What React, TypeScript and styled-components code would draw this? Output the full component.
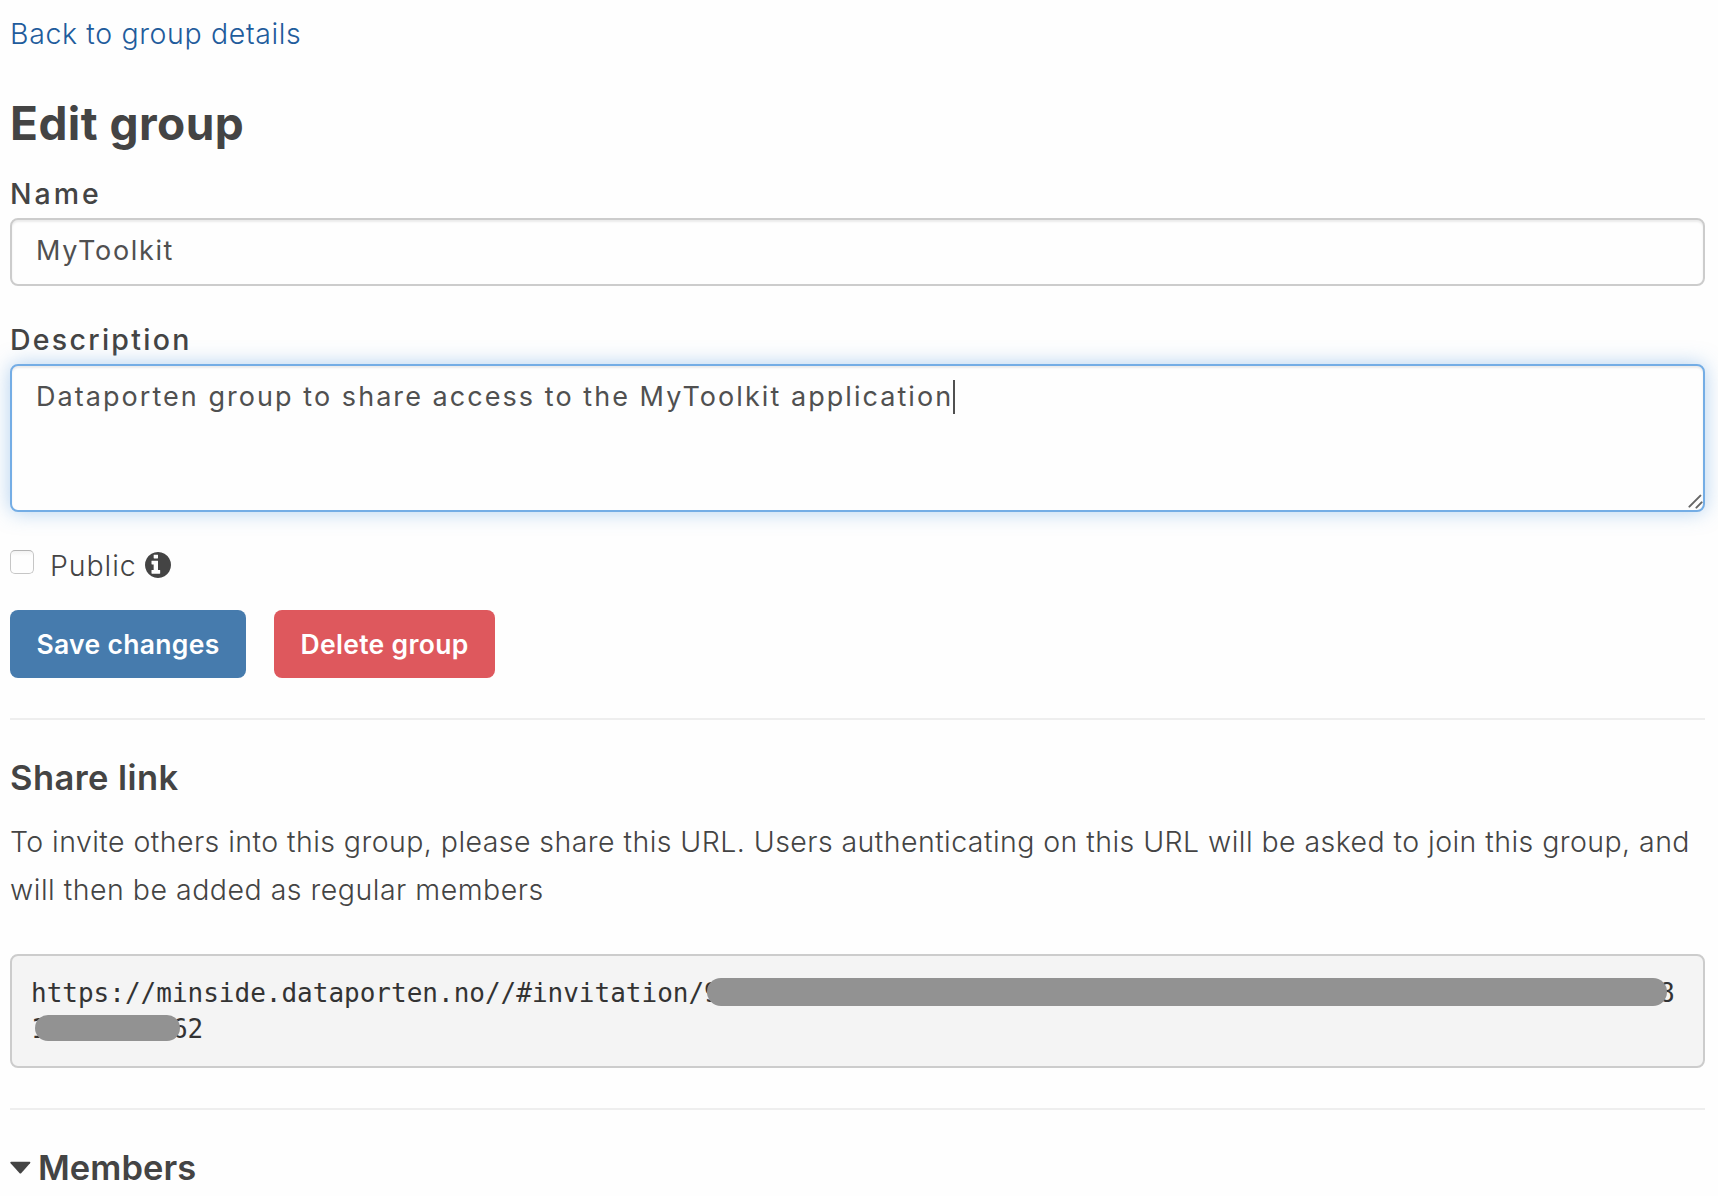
import React from "react";
import styled, { createGlobalStyle } from "styled-components";

const Global = createGlobalStyle`
  * { box-sizing: border-box; }
  body {
    margin: 0;
    background: #fefefe;
    color: #444;
    font: 300 28.5px/48px Inter, "Liberation Sans", sans-serif;
  }
`;

const Page = styled.main`
  display: flex;
  flex-direction: column;
  width: 1718px;
  height: 1196px;
  overflow: hidden;
  padding: 10px 13px 0 10px;
`;

const BackLink = styled.a`
  align-self: flex-start;
  color: #1f5c9c;
  letter-spacing: 0.63px;
  text-decoration: none;
`;

const Title = styled.h1`
  margin: 40px 0 26px;
  font-size: 46px;
  font-weight: 700;
  line-height: 50px;
  letter-spacing: 0.45px;
`;

const Field = styled.div<{ $gap: number }>`
  display: flex;
  flex-direction: column;
  gap: ${(p) => p.$gap}px;
  margin-bottom: 34px;
`;

const Label = styled.label<{ $tracking: number }>`
  font-size: 28.5px;
  font-weight: 500;
  line-height: 40px;
  letter-spacing: ${(p) => p.$tracking}px;
`;

const TextInput = styled.input`
  height: 68px;
  padding: 0 24px 4px;
  border: 2px solid #ccc;
  border-radius: 8px;
  background: #fefefe;
  box-shadow: inset 0 2px 2px rgba(0, 0, 0, 0.075);
  color: #505050;
  font: 400 27px/36px Inter, "Liberation Sans", sans-serif;
  letter-spacing: 1.65px;
  outline: none;
`;

const TextArea = styled.div`
  position: relative;
  display: flex;
  align-items: flex-start;
  height: 148px;
  padding: 13px 24px 11px;
  border: 2px solid #74ade5;
  border-radius: 8px;
  background: #fefefe;
  box-shadow: inset 0 2px 2px rgba(0, 0, 0, 0.075), 0 0 20px rgba(102, 163, 226, 0.5);
  color: #505050;
  font-size: 27px;
  font-weight: 400;
  line-height: 36px;
  letter-spacing: 2.05px;
  white-space: nowrap;
`;

const Caret = styled.span`
  width: 2px;
  height: 34px;
  margin: 1px 0 0;
  background: #505050;
`;

const ResizeGrip = styled.svg`
  position: absolute;
  right: 0;
  bottom: 0;
  width: 16px;
  height: 16px;
`;

const PublicRow = styled.label`
  display: flex;
  height: 48px;
  margin-top: -4px;
  letter-spacing: 0.92px;
`;

const Checkbox = styled.input`
  appearance: none;
  width: 24px;
  height: 24px;
  margin: 8px 16px 0 0;
  border: 1px solid #c6c6c6;
  border-top-color: #b4b4b4;
  border-radius: 5px;
  background: linear-gradient(#f3f3f3, #fefefe 5px);
`;

const InfoIcon = styled.svg`
  width: 26px;
  height: 26px;
  margin: 10px 0 0 8px;
`;

const Actions = styled.div`
  display: flex;
  gap: 28px;
  margin: 20px 0 40px;
`;

const Button = styled.button<{ $danger?: boolean }>`
  width: ${(p) => (p.$danger ? 221 : 236)}px;
  height: 68px;
  padding: 0;
  border: 0;
  border-radius: 8px;
  background: ${(p) => (p.$danger ? "#de585d" : "#467bad")};
  color: #fff;
  font: 600 26.5px/36px Inter, "Liberation Sans", sans-serif;
  letter-spacing: 0.32px;
`;

const Divider = styled.hr`
  flex: none;
  width: 100%;
  height: 2px;
  margin: 0;
  border: 0;
  background: #eee;
`;

const SectionTitle = styled.h2<{ $tracking: number }>`
  display: flex;
  align-items: center;
  gap: 7px;
  margin: 39px 0 21px;
  font-size: 34.5px;
  font-weight: 600;
  line-height: 38px;
  letter-spacing: ${(p) => p.$tracking}px;
`;

const Help = styled.p`
  margin: 0 0 40px;
  white-space: nowrap;
`;

const HelpLine = styled.span<{ $tracking: number }>`
  display: block;
  letter-spacing: ${(p) => p.$tracking}px;
`;

const LinkBox = styled.pre`
  height: 114px;
  margin: 0 0 40px;
  padding: 19px;
  border: 2px solid #ccc;
  border-radius: 8px;
  background: #f4f4f4;
  color: #333;
  font: 400 26px/36px "DejaVu Sans Mono", monospace;
`;

const LinkLine = styled.code`
  position: relative;
  display: block;
  font: inherit;
  white-space: pre;
`;

const Redaction = styled.span<{ $x: number; $y: number; $w: number; $h: number }>`
  position: absolute;
  left: ${(p) => p.$x}px;
  top: ${(p) => p.$y}px;
  width: ${(p) => p.$w}px;
  height: ${(p) => p.$h}px;
  border-radius: 14px;
  background: #929292;
`;

const Disclosure = styled.svg`
  width: 21px;
  height: 13px;
  margin-top: -2px;
`;

export default function App() {
  return (
    <Page>
      <Global />
      <BackLink href="#">Back to group details</BackLink>
      <Title>Edit group</Title>
      <Field $gap={4}>
        <Label $tracking={3}>Name</Label>
        <TextInput defaultValue="MyToolkit" />
      </Field>
      <Field $gap={4}>
        <Label $tracking={2.28}>Description</Label>
        <TextArea role="textbox">
          <span>Dataporten group to share access to the MyToolkit application</span>
          <Caret />
          <ResizeGrip viewBox="0 0 16 16" fill="none" stroke="#666" strokeWidth="2" strokeLinecap="round">
            <path d="M2.4 12.6L13.4 1.6M9.4 13.6L14.6 8.4" />
          </ResizeGrip>
        </TextArea>
      </Field>
      <PublicRow>
        <Checkbox type="checkbox" />
        <span>Public</span>
        <InfoIcon viewBox="128 128 1536 1536" fill="#444">
          <path d="M1024 1376v-160q0-14-9-23t-23-9h-96v-512q0-14-9-23t-23-9h-320q-14 0-23 9t-9 23v160q0 14 9 23t23 9h96v320h-96q-14 0-23 9t-9 23v160q0 14 9 23t23 9h448q14 0 23-9t9-23zM896 480v-160q0-14-9-23t-23-9h-192q-14 0-23 9t-9 23v160q0 14 9 23t23 9h192q14 0 23-9t9-23zM1664 896q0 209-103 385.5t-279.5 279.5t-385.5 103t-385.5-103t-279.5-279.5t-103-385.5t103-385.5t279.5-279.5t385.5-103t385.5 103t279.5 279.5t103 385.5z" />
        </InfoIcon>
      </PublicRow>
      <Actions>
        <Button>Save changes</Button>
        <Button $danger>Delete group</Button>
      </Actions>
      <Divider />
      <SectionTitle $tracking={0.45}>Share link</SectionTitle>
      <Help>
        <HelpLine $tracking={0.44}>
          To invite others into this group, please share this URL. Users authenticating on this URL will be asked to join this group, and
        </HelpLine>
        <HelpLine $tracking={0.5}>will then be added as regular members</HelpLine>
      </Help>
      <LinkBox>
        <LinkLine>
          {"https://minside.dataporten.no//#invitation/9" + " ".repeat(60) + "8"}
          <Redaction $x={676} $y={2.7} $w={960} $h={28} />
        </LinkLine>
        <LinkLine>
          {"1" + " ".repeat(8) + "62"}
          <Redaction $x={4} $y={4} $w={145} $h={26} />
        </LinkLine>
      </LinkBox>
      <Divider />
      <SectionTitle $tracking={0.05}>
        <Disclosure viewBox="0 0 21 13" fill="#444">
          <path d="M1.2 0.8H19.6Q21 1 20 2.2L11.4 12Q10.4 13 9.4 12L0.6 2.2Q-0.3 1 1.2 0.8Z" />
        </Disclosure>
        <span>Members</span>
      </SectionTitle>
    </Page>
  );
}
